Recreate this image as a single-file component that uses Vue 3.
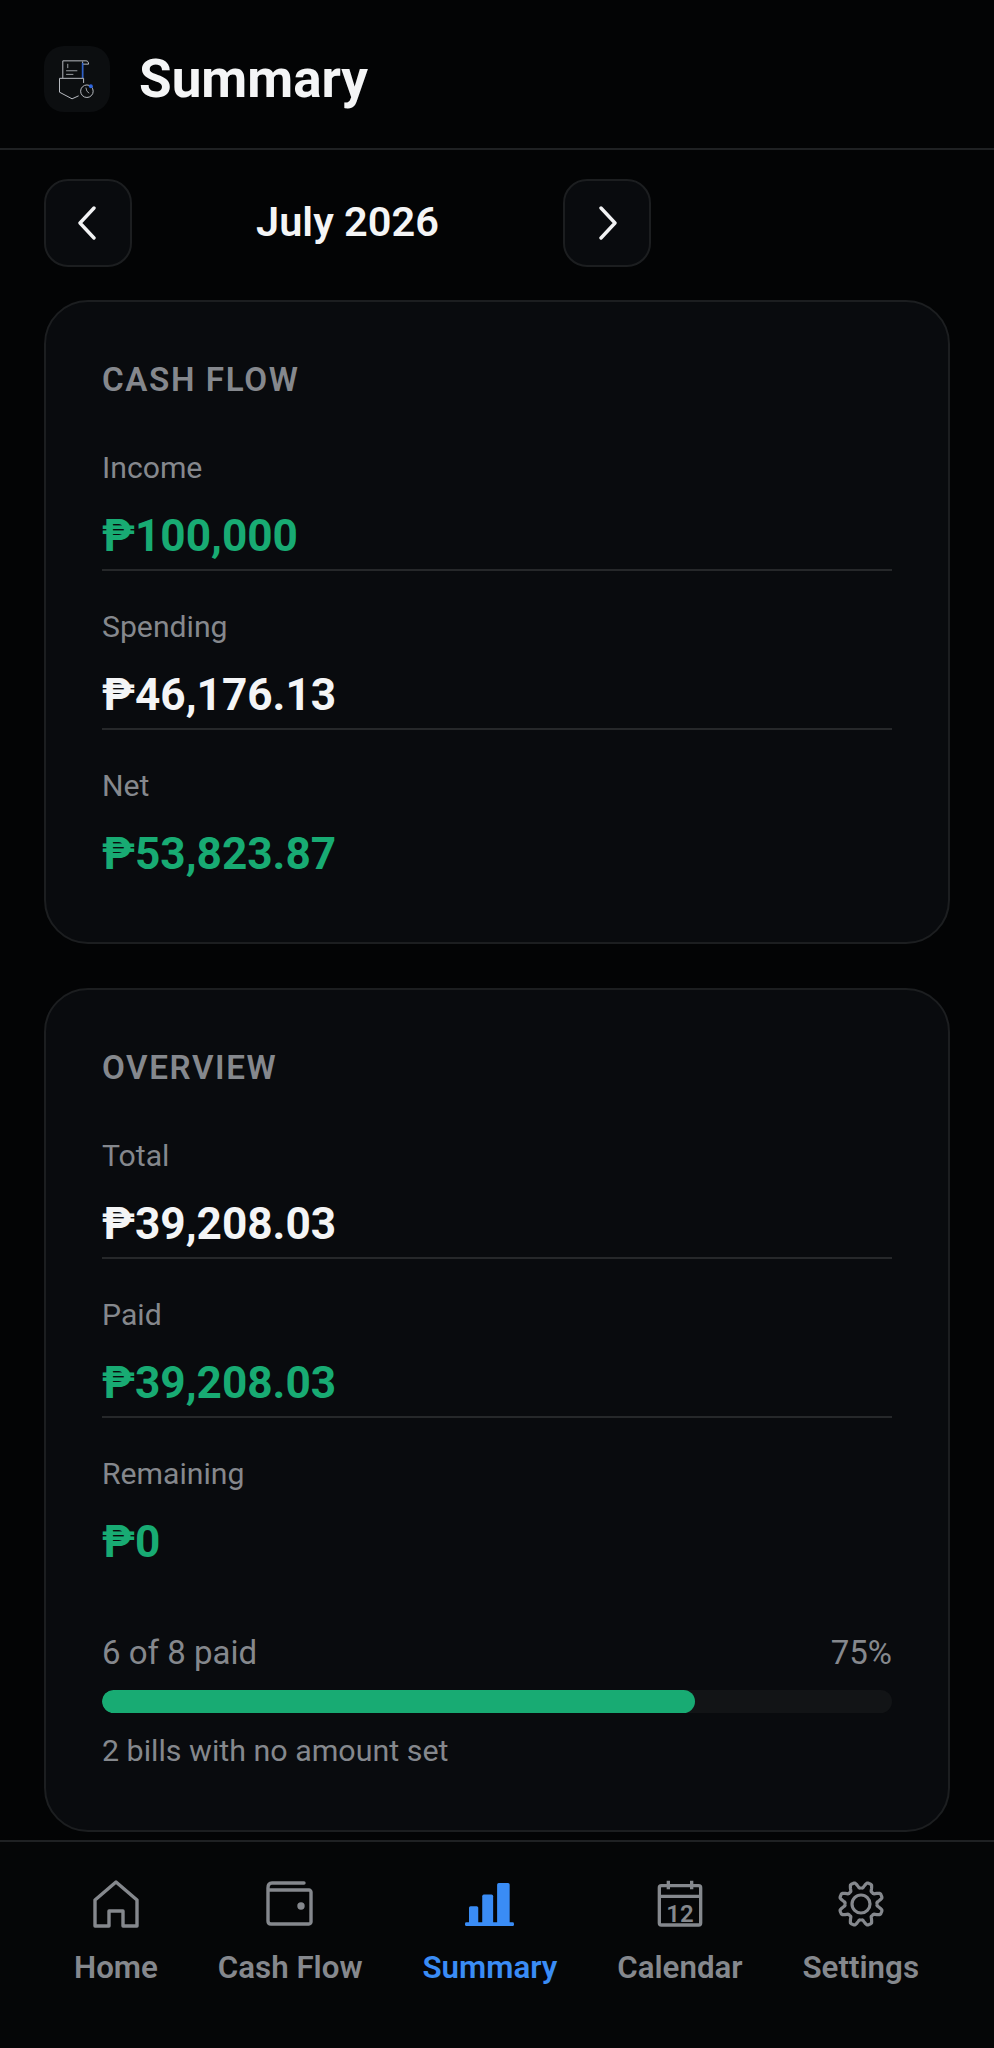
<script setup>
const cashFlow = [
  { label: 'Income', value: '₱100,000', green: true },
  { label: 'Spending', value: '₱46,176.13', green: false },
  { label: 'Net', value: '₱53,823.87', green: true }
]

const overview = [
  { label: 'Total', value: '₱39,208.03', green: false },
  { label: 'Paid', value: '₱39,208.03', green: true },
  { label: 'Remaining', value: '₱0', green: true }
]

const percent = 75

// 8 rounded teeth, the notch sits straight up
const gearPath = (() => {
  const pts = []
  for (let i = 0; i < 160; i++) {
    const a = (i / 160) * Math.PI * 2
    const wave = Math.max(-1, Math.min(1, 1.5 * Math.cos(8 * (a + Math.PI / 8))))
    const r = 19 + 3 * wave
    pts.push((25 + r * Math.sin(a)).toFixed(2) + ' ' + (25 - r * Math.cos(a)).toFixed(2))
  }
  return 'M' + pts.join('L') + 'Z'
})()
</script>

<template>
  <div class="screen">
    <header class="topbar">
      <div class="logo">
        <svg viewBox="45 45 200 200" width="66" height="66" fill="none" stroke="#b9bcc2" stroke-width="3">
          <path d="M102 142V90H172M172 90c6 0 8 4 8 10h-18M162 92v50" />
          <path d="M162 96v46" stroke="#2c5fc9" stroke-width="5" />
          <path d="M117 99v13M112 120h34M112 131h22" stroke-width="2.5" />
          <path d="M92 143h73v14M92 143v42l38 20 20-9" />
          <circle cx="175" cy="182" r="19" />
          <path d="M172 171l3 11 7 6" stroke-width="2.5" />
          <circle cx="187" cy="167" r="6" fill="#2f66e0" stroke="none" />
        </svg>
      </div>
      <h1>Summary</h1>
    </header>

    <main class="content">
      <div class="month-nav">
        <button class="month-btn">
          <svg viewBox="0 0 20 34" width="20" height="34" fill="none" stroke="#f2f3f4" stroke-width="3.4" stroke-linecap="round" stroke-linejoin="round"><path d="M16 2 2 17l14 15" /></svg>
        </button>
        <div class="month">July 2026</div>
        <button class="month-btn">
          <svg viewBox="0 0 20 34" width="20" height="34" fill="none" stroke="#f2f3f4" stroke-width="3.4" stroke-linecap="round" stroke-linejoin="round"><path d="m4 2 14 15L4 32" /></svg>
        </button>
      </div>

      <section class="card">
        <h2>CASH FLOW</h2>
        <div v-for="item in cashFlow" :key="item.label" class="row">
          <div class="label">{{ item.label }}</div>
          <div class="value" :class="{ green: item.green }">{{ item.value }}</div>
        </div>
        <div class="card-end"></div>
      </section>

      <section class="card">
        <h2>OVERVIEW</h2>
        <div v-for="item in overview" :key="item.label" class="row">
          <div class="label">{{ item.label }}</div>
          <div class="value" :class="{ green: item.green }">{{ item.value }}</div>
        </div>
        <div class="progress-head">
          <span>6 of 8 paid</span>
          <span>{{ percent }}%</span>
        </div>
        <div class="track">
          <div class="fill" :style="{ width: percent + '%' }"></div>
        </div>
        <div class="note">2 bills with no amount set</div>
      </section>
    </main>

    <nav class="tabs">
      <div class="tab">
        <div class="icon">
          <svg viewBox="0 0 46 48" width="46" height="48" fill="none" stroke="currentColor" stroke-width="3.4" stroke-linejoin="round">
            <path d="M2 46V20L23 2l21 18v26H30V31H16v15z" />
          </svg>
        </div>
        <span>Home</span>
      </div>
      <div class="tab">
        <div class="icon">
          <svg viewBox="0 0 48 48" width="48" height="48" fill="none" stroke="currentColor" stroke-width="3.4" stroke-linecap="round" stroke-linejoin="round">
            <path d="M38 3H6C3.500 3 2 5 2 8v33c0 2 1 3 3 3h38c1 0 2-1 2-2V12c0-1-1-2-2-2H2" />
            <circle cx="35" cy="26" r="2" fill="currentColor" />
          </svg>
        </div>
        <span>Cash Flow</span>
      </div>
      <div class="tab active">
        <div class="icon">
          <svg viewBox="30 35 148 130" width="49" height="43" fill="currentColor">
            <rect x="42" y="105" width="28" height="55" rx="5" />
            <rect x="82" y="70" width="33" height="90" rx="5" />
            <rect x="127" y="35" width="38" height="125" rx="5" />
            <rect x="30" y="154" width="148" height="11" rx="4" />
          </svg>
        </div>
        <span>Summary</span>
      </div>
      <div class="tab">
        <div class="icon">
          <svg viewBox="30 20 150 150" width="50" height="50" fill="none" stroke="currentColor" stroke-width="10" stroke-linejoin="round">
            <rect x="43" y="40" width="124" height="118" rx="6" />
            <path d="M43 72h124M70 25v26M140 25v26" />
            <text x="105" y="149" text-anchor="middle" font-family="Roboto, sans-serif" font-size="72" font-weight="600" fill="currentColor" stroke="none">12</text>
          </svg>
        </div>
        <span>Calendar</span>
      </div>
      <div class="tab">
        <div class="icon">
          <svg viewBox="0 0 50 50" width="50" height="50" fill="none" stroke="currentColor" stroke-width="3.2" stroke-linejoin="round">
            <path :d="gearPath" />
            <circle cx="25" cy="25" r="9" />
          </svg>
        </div>
        <span>Settings</span>
      </div>
    </nav>
  </div>
</template>

<style>
html, body {
  margin: 0;
  background: #030405;
}
</style>

<style scoped>
.screen {
  width: 994px;
  height: 2048px;
  display: flex;
  flex-direction: column;
  background: #030405;
  color: #f4f5f6;
  font-family: Roboto, "Noto Sans", sans-serif;
  overflow: hidden;
}

.topbar {
  height: 150px;
  flex: none;
  display: flex;
  align-items: center;
  gap: 29px;
  padding: 10px 44px 0;
  box-sizing: border-box;
  border-bottom: 2px solid #1f2123;
}

.logo {
  width: 66px;
  height: 66px;
  border-radius: 20px;
  background: #0c0e10;
}

.logo svg {
  display: block;
}

h1 {
  margin: 0;
  font-size: 53px;
  font-weight: 700;
  line-height: 60px;
}

.content {
  flex: 1;
  min-height: 0;
  padding: 29px 44px 0;
  overflow: hidden;
}

.month-nav {
  display: flex;
  align-items: center;
  width: 607px;
  justify-content: space-between;
  margin-bottom: 33px;
}

.month-btn {
  width: 88px;
  height: 88px;
  padding: 0;
  display: flex;
  align-items: center;
  justify-content: center;
  box-sizing: border-box;
  background: #090b0e;
  border: 2px solid #1c1e20;
  border-radius: 24px;
}

.month {
  padding-bottom: 3px;
  font-size: 41.5px;
  font-weight: 600;
}

.card {
  box-sizing: border-box;
  width: 906px;
  padding: 58px 56px 0;
  margin-bottom: 44px;
  background: #090b0e;
  border: 2px solid #1c1e20;
  border-radius: 44px;
}

h2 {
  margin: 0 0 46px;
  font-size: 33.2px;
  font-weight: 600;
  letter-spacing: 1.600px;
  line-height: 40px;
  color: #85888d;
}

.row {
  padding-bottom: 4px;
  margin-bottom: 34px;
  border-bottom: 2px solid #26282a;
}

.row:nth-child(4) {
  border-bottom-color: transparent;
}

.card-end {
  height: 19px;
}

.label {
  font-size: 30.2px;
  line-height: 44px;
  color: #85888d;
}

.value {
  margin-top: 17px;
  font-size: 44.2px;
  font-weight: 700;
  line-height: 58px;
  color: #f4f5f6;
}

.green {
  color: #18ab73;
}

.progress-head {
  display: flex;
  justify-content: space-between;
  margin-top: 54px;
  font-size: 33px;
  line-height: 44px;
  color: #85888d;
}

.track {
  height: 23px;
  margin-top: 15px;
  border-radius: 12px;
  background: #121416;
  overflow: hidden;
}

.fill {
  height: 100%;
  border-radius: 12px;
  background: #18ab73;
}

.note {
  margin-top: 16px;
  padding-bottom: 57px;
  font-size: 30.4px;
  line-height: 44px;
  color: #85888d;
}

.tabs {
  height: 208px;
  flex: none;
  display: flex;
  justify-content: space-between;
  padding: 38px 75px 0 74px;
  box-sizing: border-box;
  border-top: 2px solid #1f2123;
  background: #050607;
}

.tab {
  display: flex;
  flex-direction: column;
  align-items: center;
  gap: 20px;
  color: #85888d;
  font-size: 31.3px;
  font-weight: 600;
  line-height: 40px;
}

.icon {
  height: 48px;
  display: flex;
  align-items: center;
}

.icon svg {
  display: block;
}

.active {
  color: #3a8cf5;
}
</style>
